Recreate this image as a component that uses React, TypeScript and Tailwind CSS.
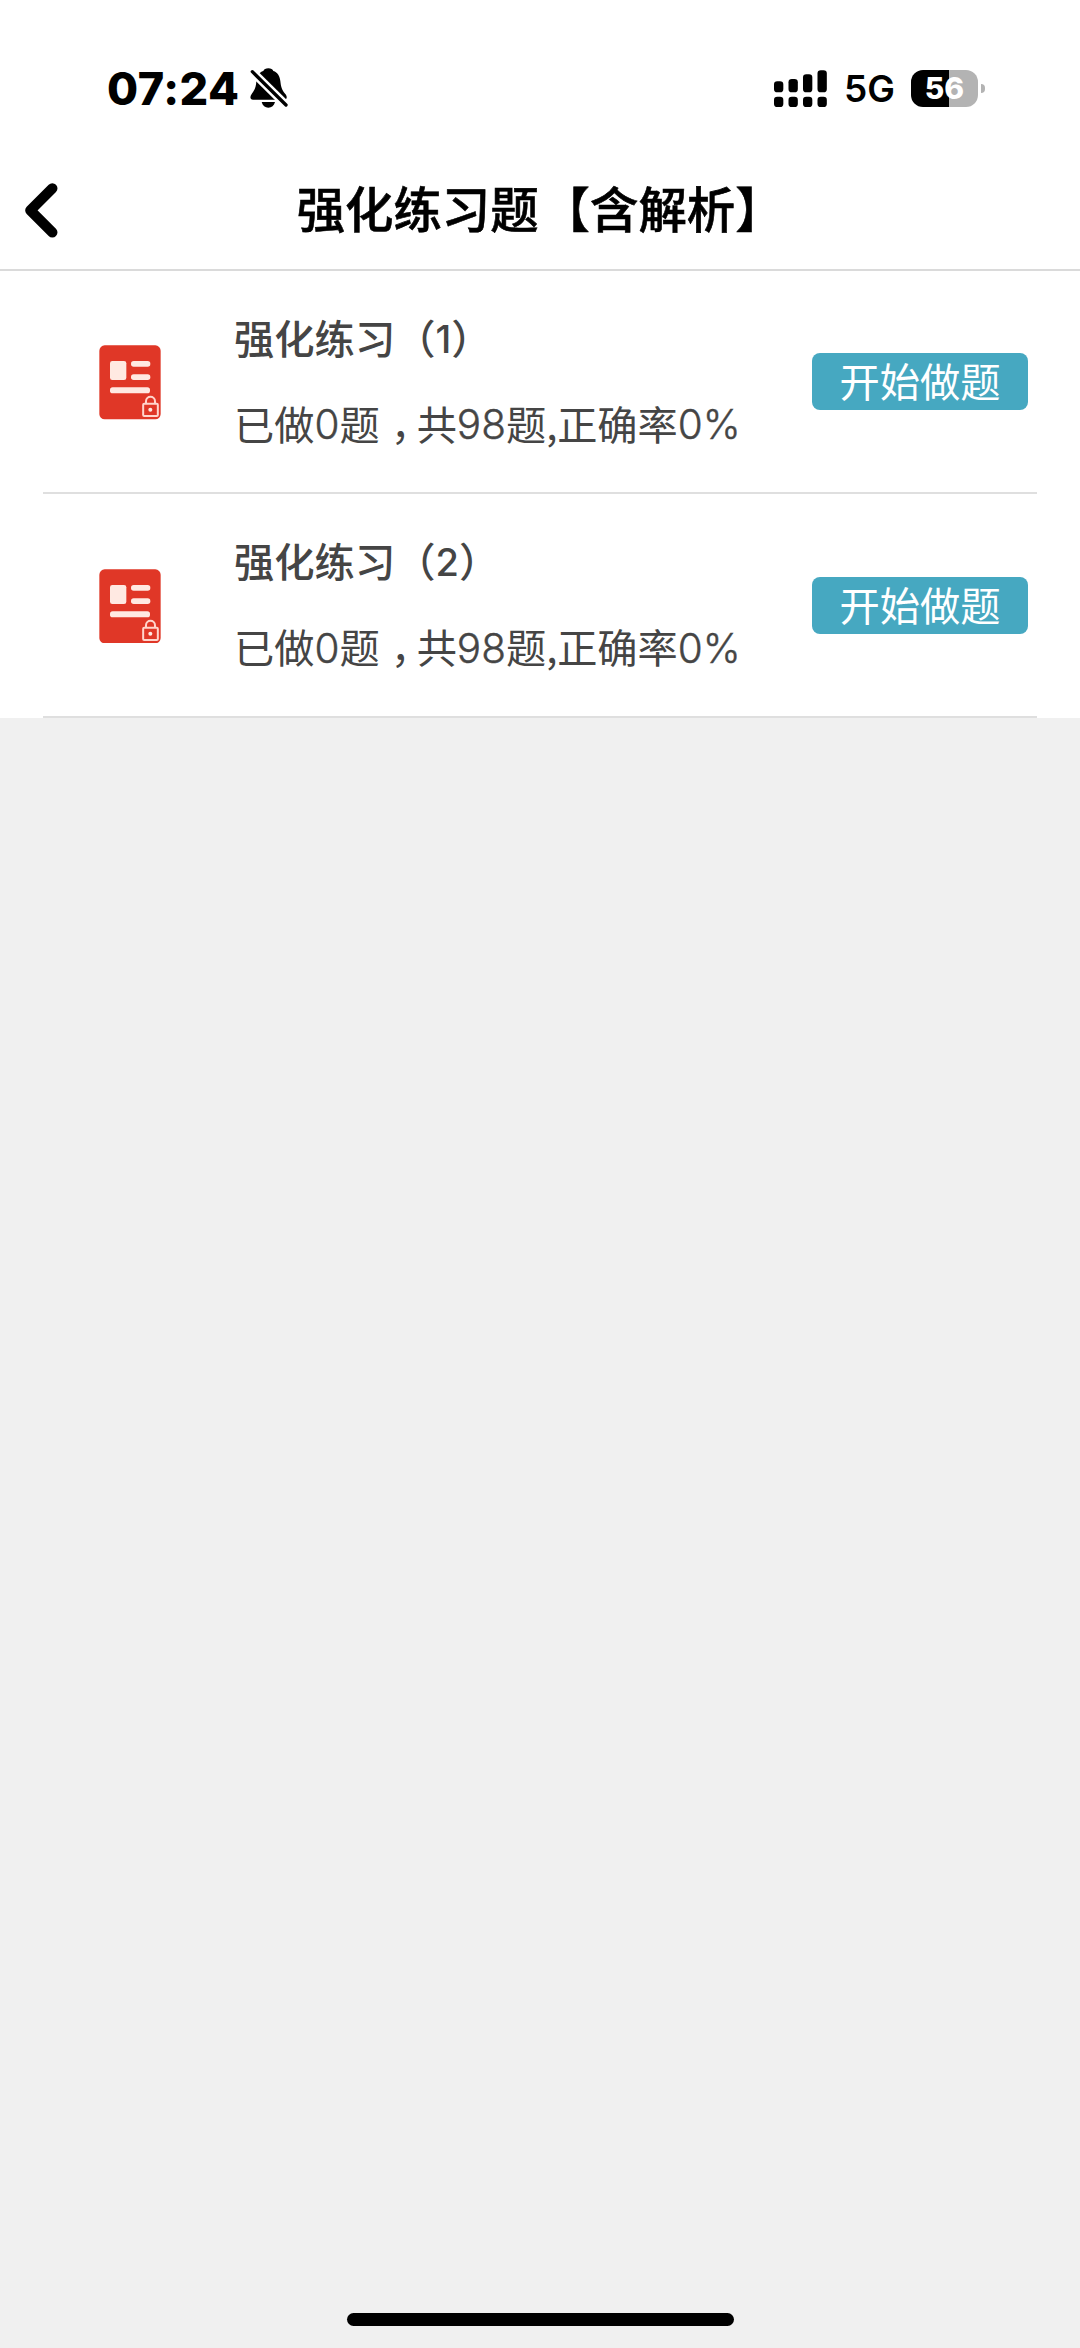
import React from "react";

function MutedBell() {
  return (
    <svg viewBox="480 50 120 125" className="ml-[10px] h-[41.67px] w-10" aria-hidden="true">
      <path
        d="M538 54 C530 54 525 57 523 62 C510 66 503 78 502 92 C501 110 498 118 488 131 C482 139 483 148 492 148 L585 148 C594 148 596 139 589 131 C578 118 576 110 574 92 C573 78 566 66 553 62 C551 57 546 54 538 54 Z"
        fill="#000"
      />
      <path d="M518 155 H558 C555 166 548 172 538 172 C528 172 521 166 518 155 Z" fill="#000" />
      <path d="M490 64 L591 164" stroke="#fff" strokeWidth="25" />
      <path d="M490 64 L591 164" stroke="#000" strokeWidth="10" strokeLinecap="round" />
    </svg>
  );
}

function Signal() {
  const tops = [91, 84, 70, 58];
  return (
    <svg viewBox="40 54 164 117" className="h-[39px] w-[54.67px]" aria-hidden="true">
      {tops.map((top, i) => (
        <g key={top}>
          <rect x={43 + i * 43.5} y={top} width="28" height={124 - top} rx="10" />
          <rect x={43 + i * 43.5} y="137" width="28" height="31" rx="10" />
        </g>
      ))}
    </svg>
  );
}

function Battery() {
  return (
    <div className="flex items-center">
      <div className="flex h-[37px] w-[67px] items-center justify-center rounded-[12px] bg-[linear-gradient(to_right,#000_56%,#b3b3b3_56%)] text-[30px] leading-none font-extrabold text-white">
        56
      </div>
      <div className="ml-[3px] h-[9px] w-[4px] rounded-r-full bg-[#b3b3b3]" />
    </div>
  );
}

function StatusBar() {
  return (
    <div className="flex h-44 w-full items-center justify-between pr-[95px] pl-[107px] font-['Inter',sans-serif] text-black">
      <div className="flex items-center">
        <span className="w-[132px] text-[45px] leading-none font-extrabold tracking-[0.5px]">07:24</span>
        <MutedBell />
      </div>
      <div className="flex items-center">
        <Signal />
        <span className="ml-4 text-[37px] leading-none font-semibold">5G</span>
        <div className="ml-4">
          <Battery />
        </div>
      </div>
    </div>
  );
}

function LockedPaper() {
  return (
    <svg viewBox="58 73 186 224" className="mt-[2px] ml-[56px] h-[74.67px] w-[62px] shrink-0" aria-hidden="true">
      <rect x="59" y="74" width="184" height="222" rx="16" fill="#e03727" />
      <g fill="#ffe9e2">
        <rect x="91" y="121" width="49" height="57" rx="7" />
        <rect x="154" y="121" width="58" height="17" rx="8" />
        <rect x="154" y="161" width="58" height="17" rx="8" />
        <rect x="91" y="200" width="120" height="18" rx="8" />
        <circle cx="212" cy="267" r="6" />
      </g>
      <g fill="none" stroke="#ffd5cc" strokeWidth="6">
        <rect x="190.5" y="249" width="44" height="37" rx="3" />
        <path d="M199 248 V242 C199 224 226 224 226 242 V248" />
      </g>
    </svg>
  );
}

function Digits({ children }: { children: string }) {
  return (
    <span className="pt-[5px] font-['Inter',sans-serif] text-[40.5px] font-light [-webkit-text-stroke:0.4px_#454545]">
      {children}
    </span>
  );
}

function ExerciseRow({ index }: { index: number }) {
  return (
    <li className="flex h-56 items-center border-b-2 border-[#dfdfdf] first:h-[223px]">
      <LockedPaper />
      <div className="mb-[3px] ml-[73px] flex-1 whitespace-nowrap text-[#454545]">
        <div className="flex h-[60px] items-center text-[40.3px] leading-none font-medium">
          <span>强化练习</span>
          <span>（</span>
          <span className="pt-[3px] font-['Inter',sans-serif] text-[38px]">{index}</span>
          <span>）</span>
        </div>
        <div className="mt-[26px] flex h-[60px] items-center text-[40.2px] leading-none">
          <span>已做</span>
          <Digits>0</Digits>
          <span>题</span>
          <span className="w-[37px] pl-[11px] [font-feature-settings:'halt']">，</span>
          <span>共</span>
          <Digits>98</Digits>
          <span>题</span>
          <span className="w-[11px]">,</span>
          <span>正确率</span>
          <Digits>0%</Digits>
        </div>
      </div>
      <button className="mr-[9px] flex h-[57px] w-[216px] items-center justify-center rounded-lg bg-[#46a8c1] pb-[2px] text-[40.3px] leading-none text-white">
        开始做题
      </button>
    </li>
  );
}

export default function App() {
  return (
    <div className="flex h-[2348px] w-[1080px] flex-col bg-[#f0f0f0] font-['Noto_Sans_CJK_SC',sans-serif]">
      <div className="bg-white">
        <StatusBar />
        <header className="-mt-[6px] flex h-[101px] items-center border-b-2 border-[#dadada]">
          <svg viewBox="75 70 98 164" className="mb-[18px] ml-[25px] h-[54.67px] w-[32.67px]" fill="none" aria-hidden="true">
            <path d="M157 86 L91 152 L157 218" stroke="#000" strokeWidth="31" strokeLinecap="round" strokeLinejoin="round" />
          </svg>
          <h1 className="mb-[24px] ml-[239px] flex text-[48.4px] leading-none font-medium text-black [-webkit-text-stroke:0.6px_#000]">
            <span>强化练习题</span>
            <span className="pl-[3px]">【含解析】</span>
          </h1>
        </header>
        <ul className="px-[43px]">
          <ExerciseRow index={1} />
          <ExerciseRow index={2} />
        </ul>
      </div>
      <div className="mt-auto mb-[22px] h-[13px] w-[387px] self-center rounded-full bg-black" />
    </div>
  );
}
